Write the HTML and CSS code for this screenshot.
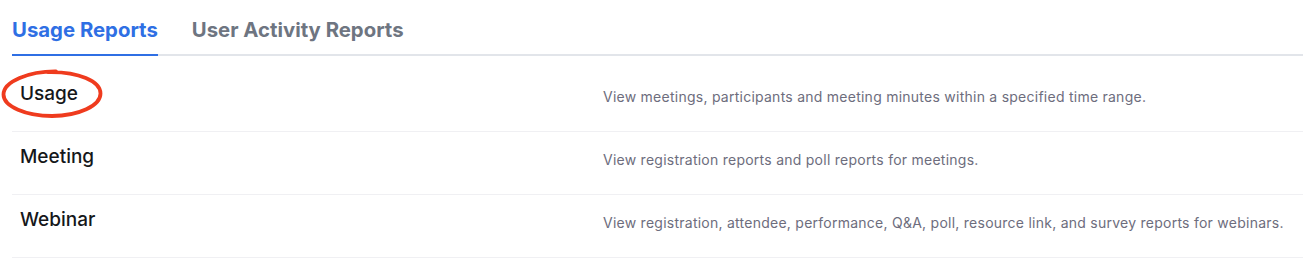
FILE: index.html
```html
<!DOCTYPE html>
<html lang="en">
<head>
<meta charset="utf-8">
<title>Reports</title>
<link rel="stylesheet" href="styles.css">
</head>
<body>
<div class="page">
  <nav class="tabs">
    <div class="tab tab-active">Usage Reports</div>
    <div class="tab">User Activity Reports</div>
  </nav>
  <div class="list">
    <div class="row">
      <div class="label">Usage</div>
      <div class="desc">View meetings, participants and meeting minutes within a specified time range.</div>
      <svg class="circle" width="108" height="58" viewBox="0 0 108 58" aria-hidden="true">
        <path d="M56 5.4 C 29 5.2, 3.5 15.5, 3.5 28.5 C 3.5 40.5, 26 50, 52 50 C 78.8 50, 100.5 39.7, 100.5 27.5 C 100.5 15.3, 78.8 5.5, 48 6.2" fill="none" stroke="#ef3b1e" stroke-width="3.8" stroke-linecap="round"/>
      </svg>
    </div>
    <div class="row">
      <div class="label">Meeting</div>
      <div class="desc">View registration reports and poll reports for meetings.</div>
    </div>
    <div class="row">
      <div class="label">Webinar</div>
      <div class="desc">View registration, attendee, performance, Q&amp;A, poll, resource link, and survey reports for webinars.</div>
    </div>
  </div>
</div>
</body>
</html>
```

FILE: styles.css
```css
* { box-sizing: border-box; }
html, body { margin: 0; padding: 0; background: #ffffff; }
body { font-family: Inter, "Liberation Sans", Arial, sans-serif; }

.page { margin: 0 1px 0 12px; }

.tabs {
  display: flex;
  gap: 34px;
  border-bottom: 2px solid #e2e5ea;
}
.tab {
  font-size: 20.35px;
  font-weight: 700;
  line-height: 28px;
  padding: 16px 0 10px;
  color: #6e7581;
}
.tab-active {
  color: #2f6fe4;
  border-bottom: 2px solid #2f6fe4;
  margin-bottom: -2px;
}

.list { margin-top: 13px; }
.row {
  position: relative;
  display: grid;
  grid-template-columns: 583px 1fr;
  align-items: start;
  height: 63px;
  padding-left: 8px;
  border-bottom: 1px solid #f0f0f3;
}
.label {
  font-size: 19px;
  font-weight: 500;
  line-height: 24px;
  padding-top: 13px;
  color: #15171a;
}
.desc {
  font-size: 14px;
  line-height: 20px;
  padding-top: 18px;
  letter-spacing: 0.25px;
  color: #6d6d7d;
}
.circle {
  position: absolute;
  left: -12px;
  top: -3px;
}
```
